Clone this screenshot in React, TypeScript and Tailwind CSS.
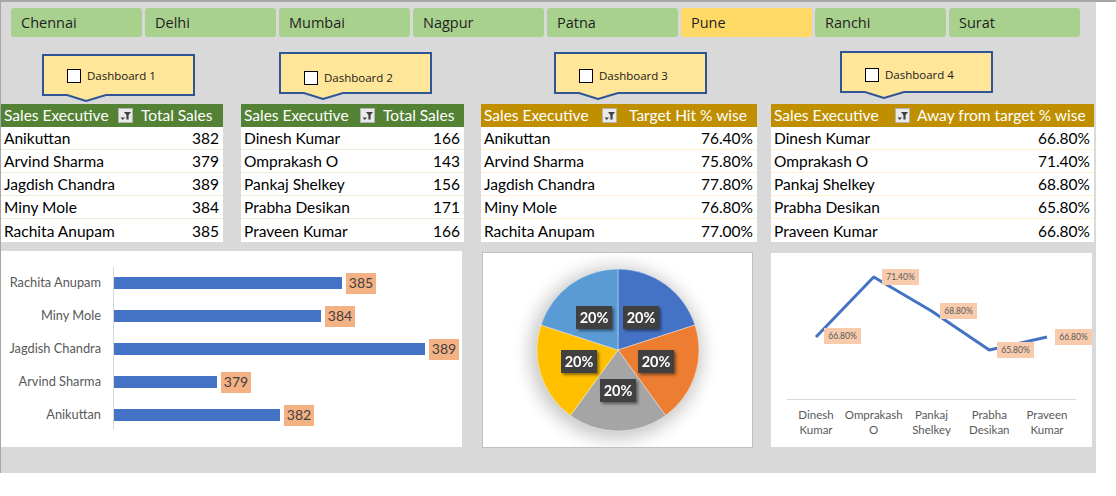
import React from "react";

const cities = ["Chennai", "Delhi", "Mumbai", "Nagpur", "Patna", "Pune", "Ranchi", "Surat"];

const callouts = [
  { label: "Dashboard 1", className: "ml-[41px] mt-[17px]", boxTop: "mt-[15px]" },
  { label: "Dashboard 2", className: "ml-[84px] mt-[15px]", boxTop: "mt-[19px]" },
  { label: "Dashboard 3", className: "ml-[122px] mt-[15px]", boxTop: "mt-[17px]" },
  { label: "Dashboard 4", className: "ml-[133px] mt-[14px]", boxTop: "mt-[17px]" },
];

type Row = [string, string];

const tables: {
  head: string;
  rows: Row[];
  width: string;
  gap: string;
  col: string;
  headGap: string;
  gold: boolean;
}[] = [
  {
    head: "Total Sales",
    width: "w-[222px]",
    gap: "ml-0",
    col: "w-[134px]",
    headGap: "ml-[6px]",
    gold: false,
    rows: [
      ["Anikuttan", "382"],
      ["Arvind Sharma", "379"],
      ["Jagdish Chandra", "389"],
      ["Miny Mole", "384"],
      ["Rachita Anupam", "385"],
    ],
  },
  {
    head: "Total Sales",
    width: "w-[223px]",
    gap: "ml-[18px]",
    col: "w-[136px]",
    headGap: "ml-[6px]",
    gold: false,
    rows: [
      ["Dinesh Kumar", "166"],
      ["Omprakash O", "143"],
      ["Pankaj Shelkey", "156"],
      ["Prabha Desikan", "171"],
      ["Praveen Kumar", "166"],
    ],
  },
  {
    head: "Target Hit % wise",
    width: "w-[276px]",
    gap: "ml-[17px]",
    col: "w-[138px]",
    headGap: "ml-[10px]",
    gold: true,
    rows: [
      ["Anikuttan", "76.40%"],
      ["Arvind Sharma", "75.80%"],
      ["Jagdish Chandra", "77.80%"],
      ["Miny Mole", "76.80%"],
      ["Rachita Anupam", "77.00%"],
    ],
  },
  {
    head: "Away from target % wise",
    width: "w-[323px]",
    gap: "ml-[14px]",
    col: "w-[141px]",
    headGap: "ml-[5px]",
    gold: true,
    rows: [
      ["Dinesh Kumar", "66.80%"],
      ["Omprakash O", "71.40%"],
      ["Pankaj Shelkey", "68.80%"],
      ["Prabha Desikan", "65.80%"],
      ["Praveen Kumar", "66.80%"],
    ],
  },
];

function FilterIcon() {
  return (
    <svg width="15" height="15" viewBox="0 0 15 15" className="shrink-0">
      <rect x="0.5" y="0.5" width="14" height="14" fill="#e9e9e9" stroke="#b4b4b4" />
      <polygon points="6,4 13,4 10.6,7 10.6,11.5 8.4,11.5 8.4,7" fill="#404040" />
      <polygon points="2.5,9.5 7,9.5 4.75,12" fill="#404040" />
    </svg>
  );
}

function Callout({ label, className, boxTop }: { label: string; className: string; boxTop: string }) {
  return (
    <div className={`relative w-[153px] h-[48px] shrink-0 ${className}`}>
      <svg width="153" height="48" viewBox="0 0 153 48" className="absolute inset-0">
        <polygon
          points="1,1 152,1 152,41 64,41 44,47 25,41 1,41"
          fill="#ffe699"
          stroke="#2f5597"
          strokeWidth="2"
          strokeLinejoin="miter"
        />
      </svg>
      <div className={`relative flex items-center gap-[6px] pl-[25px] ${boxTop}`}>
        <span className="w-[14px] h-[14px] bg-white border border-black" />
        <span className="text-[11.5px] text-[#1a1a1a] leading-none">{label}</span>
      </div>
    </div>
  );
}

function DataTable({ t }: { t: (typeof tables)[number] }) {
  const head = t.gold ? "bg-[#bf8f00]" : "bg-[#548235]";
  const line = t.gold ? "border-[#fff2cc]" : "border-[#e2efda]";
  return (
    <div className={`${t.width} ${t.gap} shrink-0 font-['Lato'] text-[15.5px]`}>
      <div className={`${head} h-[23px] flex items-center text-white`}>
        <div className={`${t.col} flex items-center justify-between pl-[3px] pr-[2px]`}>
          <span className="pt-[1px]">Sales Executive</span>
          <FilterIcon />
        </div>
        <span className={`${t.headGap} pt-[1px] whitespace-nowrap`}>{t.head}</span>
      </div>
      {t.rows.map(([n, v], i) => (
        <div
          key={n}
          className={`bg-white h-[23px] flex items-center justify-between pl-[3px] pr-[4px] pt-[2px] text-black ${
            i < t.rows.length - 1 ? `border-b ${line}` : ""
          }`}
        >
          <span>{n}</span>
          <span>{v}</span>
        </div>
      ))}
    </div>
  );
}

function BarChart() {
  const bars = [
    { n: "Rachita Anupam", v: "385", end: 341, y: 26 },
    { n: "Miny Mole", v: "384", end: 320, y: 59 },
    { n: "Jagdish Chandra", v: "389", end: 424, y: 92 },
    { n: "Arvind Sharma", v: "379", end: 216, y: 125 },
    { n: "Anikuttan", v: "382", end: 279, y: 158 },
  ];
  return (
    <div className="w-[461px] h-[196px] bg-white mt-[9px] shrink-0">
      <svg width="461" height="196" viewBox="0 0 461 196" fontFamily="Lato, sans-serif">
        <line x1="112.5" y1="16" x2="112.5" y2="179" stroke="#d9d9d9" />
        {bars.map((b) => (
          <g key={b.n}>
            <text x="100" y={b.y + 10} textAnchor="end" fontSize="12.8" fill="#595959">
              {b.n}
            </text>
            <rect x="113" y={b.y} width={b.end - 113} height="12" fill="#4472c4" />
            <rect x={b.end + 4} y={b.y - 4} width="30" height="21" fill="#f4b183" />
            <text x={b.end + 19} y={b.y + 11} textAnchor="middle" fontSize="14" fill="#404040">
              {b.v}
            </text>
          </g>
        ))}
      </svg>
    </div>
  );
}

function PieChart() {
  const slices = [
    { d: "M136,98 L136,17 A81,81 0 0 1 213.04,72.97 Z", c: "#4472c4" },
    { d: "M136,98 L213.04,72.97 A81,81 0 0 1 183.61,163.53 Z", c: "#ed7d31" },
    { d: "M136,98 L183.61,163.53 A81,81 0 0 1 88.39,163.53 Z", c: "#a5a5a5" },
    { d: "M136,98 L88.39,163.53 A81,81 0 0 1 58.96,72.97 Z", c: "#ffc000" },
    { d: "M136,98 L58.96,72.97 A81,81 0 0 1 136,17 Z", c: "#5b9bd5" },
  ];
  const labels = [
    [141, 54],
    [94, 54],
    [156, 98],
    [79, 98],
    [118, 127],
  ];
  return (
    <div className="w-[271px] h-[196px] bg-white border border-[#bfbfbf] ml-[20px] mt-[10px] shrink-0">
      <svg width="269" height="194" viewBox="1 1 269 194" fontFamily="Lato, sans-serif">
        <defs>
          <filter id="pieShadow" x="-40%" y="-40%" width="180%" height="180%">
            <feGaussianBlur stdDeviation="9" />
          </filter>
          <filter id="boxShadow" x="-30%" y="-30%" width="170%" height="170%">
            <feDropShadow dx="2" dy="2" stdDeviation="1.5" floodColor="#000" floodOpacity="0.45" />
          </filter>
        </defs>
        <circle cx="134" cy="101" r="86" fill="#000" opacity="0.22" filter="url(#pieShadow)" />
        {slices.map((s) => (
          <path key={s.c} d={s.d} fill={s.c} stroke="#ffffff" strokeWidth="0.4" />
        ))}
        {labels.map(([x, y], i) => (
          <g key={i} filter="url(#boxShadow)">
            <rect x={x} y={y} width="36" height="23" fill="#404040" />
            <text x={x + 18} y={y + 16.5} textAnchor="middle" fontSize="14.5" fontWeight="700" fill="#ffffff">
              20%
            </text>
          </g>
        ))}
      </svg>
    </div>
  );
}

function LineChart() {
  const pts = [
    [45, 84],
    [102.7, 24],
    [160.5, 58],
    [218.3, 97],
    [276, 84],
  ];
  const labels = [
    { t: "66.80%", x: 53, y: 75 },
    { t: "71.40%", x: 111, y: 16 },
    { t: "68.80%", x: 169, y: 50 },
    { t: "65.80%", x: 226, y: 89 },
    { t: "66.80%", x: 284, y: 76 },
  ];
  const cats = [
    ["Dinesh", "Kumar"],
    ["Omprakash", "O"],
    ["Pankaj", "Shelkey"],
    ["Prabha", "Desikan"],
    ["Praveen", "Kumar"],
  ];
  return (
    <div className="w-[321px] h-[194px] bg-white ml-[18px] mt-[11px] shrink-0">
      <svg width="321" height="194" viewBox="0 0 321 194" fontFamily="Lato, sans-serif">
        <line x1="16" y1="146.5" x2="305" y2="146.5" stroke="#d9d9d9" />
        <polyline
          points={pts.map((p) => p.join(",")).join(" ")}
          fill="none"
          stroke="#4472c4"
          strokeWidth="3"
          strokeLinejoin="round"
        />
        {labels.map((l, i) => (
          <g key={i}>
            <rect x={l.x} y={l.y} width="37" height="16" fill="#f8cbad" />
            <text x={l.x + 18.5} y={l.y + 11} textAnchor="middle" fontSize="8.5" fill="#595959">
              {l.t}
            </text>
          </g>
        ))}
        {cats.map(([a, b], i) => (
          <g key={a}>
            <text x={pts[i][0]} y="166" textAnchor="middle" fontSize="11.5" fill="#595959">
              {a}
            </text>
            <text x={pts[i][0]} y="181" textAnchor="middle" fontSize="11.5" fill="#595959">
              {b}
            </text>
          </g>
        ))}
      </svg>
    </div>
  );
}

export default function App() {
  return (
    <div className="w-[1116px] h-[496px] bg-white overflow-hidden border-t-2 border-[#a6a6a6]">
      <div className="w-[1096px] h-[471px] bg-[#d9d9d9] border-l border-[#a6a6a6]">
        {/* city slicer */}
        <div className="flex gap-[3px] pt-[6px] pl-[10px]">
          {cities.map((c) => (
            <div
              key={c}
              className={`w-[131px] h-[29px] rounded-[3px] flex items-center pl-[10px] font-['Open_Sans'] text-[14.5px] text-[#1f1f1f] ${
                c === "Pune" ? "bg-[#ffd966]" : "bg-[#a9d18e]"
              }`}
            >
              {c}
            </div>
          ))}
        </div>

        {/* dashboard callouts */}
        <div className="flex h-[67px] font-['Open_Sans']">
          {callouts.map((c) => (
            <Callout key={c.label} {...c} />
          ))}
        </div>

        {/* tables */}
        <div className="flex">
          {tables.map((t, i) => (
            <DataTable key={i} t={t} />
          ))}
        </div>

        {/* charts */}
        <div className="flex items-start">
          <BarChart />
          <PieChart />
          <LineChart />
        </div>
      </div>
    </div>
  );
}
